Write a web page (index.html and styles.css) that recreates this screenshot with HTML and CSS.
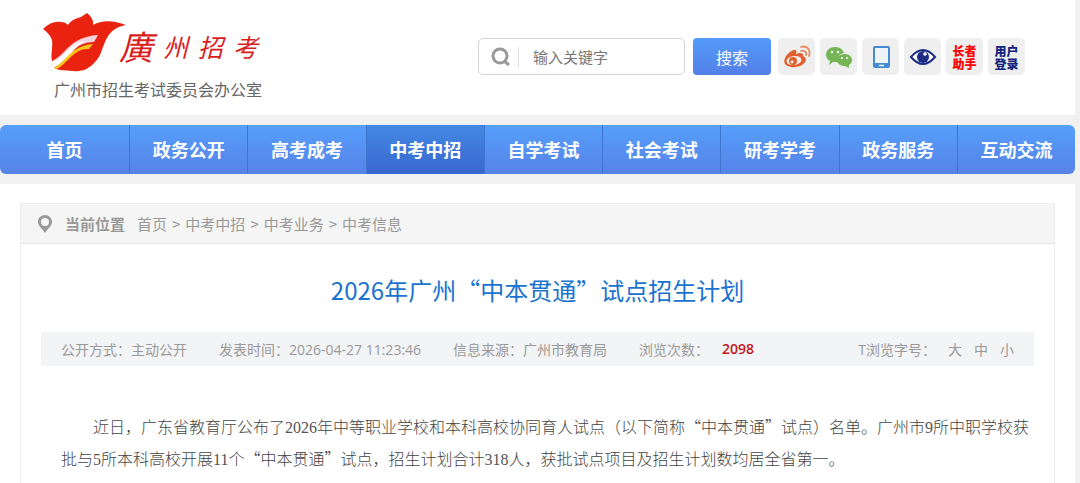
FILE: index.html
```html
<!DOCTYPE html>
<html lang="zh-CN">
<head>
<meta charset="utf-8">
<title>2026年广州“中本贯通”试点招生计划</title>
<link rel="stylesheet" href="styles.css">
</head>
<body>
<div class="page">
  <header class="header">
    <a class="brand" href="#">
      <span class="brand-top">
        <svg class="brand-mark" viewBox="0 0 84 60" aria-hidden="true">
          <path fill="#e9230f" d="M0 16C6 10 12 8 18 9C21 9 23 10 25 12C28 7 34 5 38 4L44 0C48 3 51 8 50 12C60 6 72 8 83 12C71 14 66 20 62 29C58 38 58 43 52 49C46 56 39 59 30 58L17 57C11 56 9 53 9 48C7 39 12 29 7 23C5 20 3 18 0 16Z"/>
          <path fill="#f3d3df" d="M9 48C23 42 26 24 55 22L51 29C33 29 29 41 21 47L10 53Z"/>
          <path fill="#fff" d="M9 49C22 45 26 30 42 28L36 32C29 37 25 48 10 55Z"/>
          <path fill="#fac51c" d="M11 55C23 49 27 33 50 31L46 36C31 35 25 50 14 56Z"/>
        </svg>
        <span class="brand-name"><span class="brand-initial">廣</span><span>州</span><span>招</span><span>考</span></span>
      </span>
      <span class="brand-sub">广州市招生考试委员会办公室</span>
    </a>
    <div class="tools">
      <form class="search">
        <label class="search-box">
          <svg class="search-icon" viewBox="0 0 20 20" aria-hidden="true"><circle cx="9" cy="9" r="7" fill="none" stroke="#999" stroke-width="3"/><path d="M13 14l5 4" stroke="#999" stroke-width="3"/></svg>
          <input class="search-input" type="text" placeholder="输入关键字" aria-label="输入关键字">
        </label>
        <button class="search-button" type="button">搜索</button>
      </form>
      <nav class="tiles" aria-label="快捷入口">
        <a class="tile" href="#" aria-label="微博">
          <svg viewBox="0 0 28 24" aria-hidden="true">
            <path fill="#e0602f" d="M11 5C13 4 14 6 13 9C17 7 21 8 20 11C24 13 24 17 19 20C14 23 5 23 2 19C-1 14 6 6 11 5Z"/>
            <ellipse cx="11" cy="15.500" rx="7.500" ry="4.500" fill="#f7efeb" transform="rotate(-8 11 15.500)"/>
            <circle cx="10" cy="16" r="4" fill="#e0602f"/><circle cx="9" cy="17" r="1.400" fill="#fff"/>
            <path d="M18 2C24 0 28 5 26 11M18 6C21 5 24 7 23 10" fill="none" stroke="#e58a5c" stroke-width="1.800" stroke-linecap="round"/>
          </svg>
        </a>
        <a class="tile" href="#" aria-label="微信">
          <svg viewBox="0 0 28 24" aria-hidden="true">
            <path fill="#75b556" d="M10 2C4 2 1 6 1 10C1 13 3 15 5 16L4 20L8 17L13 17C12 12 15 8 19 8C18 4 14 2 10 2Z"/>
            <path fill="#75b556" d="M20 9C15 9 12 12 12 15C12 19 16 21 20 21L24 23L24 20C26 19 27 17 27 15C27 12 24 9 20 9Z"/>
            <g fill="#f5f5f2"><circle cx="7" cy="7" r="1.200"/><circle cx="13" cy="7" r="1.200"/><circle cx="17" cy="13" r="1.100"/><circle cx="22" cy="13" r="1.100"/></g>
          </svg>
        </a>
        <a class="tile" href="#" aria-label="手机版">
          <svg viewBox="0 0 28 24" aria-hidden="true">
            <rect x="6" y="1" width="17" height="22" rx="2" fill="#458bd4"/><rect x="8" y="3" width="13" height="15" fill="#f0f3f5"/><path d="M12 20.500h5" stroke="#eef4fa" stroke-width="1.500"/>
          </svg>
        </a>
        <a class="tile" href="#" aria-label="无障碍浏览">
          <svg viewBox="0 0 28 24" aria-hidden="true">
            <path d="M2 12Q14-2 26 12Q14 26 2 12Z" fill="#fff" stroke="#1c2d85" stroke-width="2"/><circle cx="14" cy="12" r="6" fill="#1c2d85"/><circle cx="16" cy="9" r="1.800" fill="#fff"/>
          </svg>
        </a>
        <a class="tile tile-red" href="#">长者<br>助手</a>
        <a class="tile tile-navy" href="#">用户<br>登录</a>
      </nav>
    </div>
  </header>
  <nav class="nav-band" aria-label="主导航">
    <div class="nav">
      <a class="nav-item nav-home" href="#">首页</a>
      <a class="nav-item" href="#">政务公开</a>
      <a class="nav-item" href="#">高考成考</a>
      <a class="nav-item nav-active" href="#" aria-current="page">中考中招</a>
      <a class="nav-item" href="#">自学考试</a>
      <a class="nav-item" href="#">社会考试</a>
      <a class="nav-item" href="#">研考学考</a>
      <a class="nav-item" href="#">政务服务</a>
      <a class="nav-item" href="#">互动交流</a>
    </div>
  </nav>
  <main class="content">
    <nav class="crumbs" aria-label="当前位置">
      <svg class="pin" viewBox="0 0 14 18" aria-hidden="true"><path fill="#999" fill-rule="evenodd" d="M7 0C3 0 0 3 0 7C0 11 4 13 7 18C10 13 14 11 14 7C14 3 11 0 7 0ZM7 3A4 4 0 1 1 7 11A4 4 0 1 1 7 3Z"/></svg>
      <strong class="crumb-label">当前位置</strong>
      <span class="crumb-list"><a href="#">首页</a><span>&gt;</span><a href="#">中考中招</a><span>&gt;</span><a href="#">中考业务</a><span>&gt;</span><a href="#">中考信息</a></span>
    </nav>
    <article class="article">
      <h1 class="title">2026年广州“中本贯通”试点招生计划</h1>
      <div class="meta">
        <span>公开方式：主动公开</span>
        <span>发表时间：2026-04-27 11:23:46</span>
        <span>信息来源：广州市教育局</span>
        <span class="views">浏览次数：<b class="count">2098</b></span>
        <span class="sizes"><span>T浏览字号：</span><a href="#">大</a><a href="#">中</a><a href="#">小</a></span>
      </div>
      <p class="text">近日，广东省教育厅公布了<span class="num">2026</span>年中等职业学校和本科高校协同育人试点（以下简称“中本贯通”试点）名单。广州市<span class="num">9</span>所中职学校获批与<span class="num">5</span>所本科高校开展<span class="num">11</span>个“中本贯通”试点，招生计划合计<span class="num">318</span>人，获批试点项目及招生计划数均居全省第一。</p>
    </article>
  </main>
</div>
</body>
</html>
```
FILE: styles.css
```css
* { box-sizing: border-box; }
body {
  margin: 0;
  background: #f1f1f1;
  font-family: "Noto Sans CJK SC", sans-serif;
  color: #999;
}
a { color: inherit; text-decoration: none; }
.page {
  display: flex;
  flex-direction: column;
  min-height: 100vh;
  margin-right: 5px;
  background: #fff;
}

.header {
  display: flex;
  justify-content: space-between;
  align-items: flex-start;
  padding: 13px 50px 13px 43px;
}
.brand { display: flex; flex-direction: column; gap: 4px; }
.brand-top { display: flex; align-items: flex-start; }
.brand-mark { width: 84px; height: 60px; }
.brand-name {
  display: flex;
  align-items: center;
  gap: 10px;
  height: 60px;
  padding-top: 6px;
  margin-left: -8px;
  color: #da1d1d;
  font-size: 25px;
  font-style: italic;
  line-height: 40px;
}
.brand-initial { font-size: 34px; }
.brand-sub {
  padding-left: 11px;
  color: #666;
  font-size: 16px;
  line-height: 25px;
}
.tools { display: flex; gap: 7px; padding-top: 25px; }
.search { display: flex; gap: 8px; }
.search-box {
  display: flex;
  align-items: center;
  width: 207px;
  height: 37px;
  padding-left: 12px;
  border: 1px solid #d5d5d5;
  border-radius: 5px;
}
.search-icon { flex: none; width: 20px; height: 20px; }
.search-input {
  flex: 1;
  min-width: 0;
  height: 20px;
  margin-left: 7px;
  padding: 0 0 0 14px;
  border: 0;
  border-left: 1px solid #ddd;
  outline: 0;
  background: transparent;
  color: #777;
  font-family: inherit;
  font-size: 15px;
}
.search-input::placeholder { color: #777; opacity: 1; }
.search-button {
  width: 78px;
  height: 37px;
  padding: 0;
  border: 0;
  border-radius: 4px;
  background: linear-gradient(#539bf9, #547fe7);
  color: #fff;
  font-family: inherit;
  font-size: 16px;
}
.tiles { display: flex; gap: 5px; }
.tile {
  display: flex;
  align-items: center;
  justify-content: center;
  width: 37px;
  height: 37px;
  border-radius: 5px;
  background: #efefef;
  font-size: 12px;
  font-weight: 900;
  line-height: 13px;
}
.tile svg { width: 28px; height: 24px; }
.tile-red { color: #f00; }
.tile-navy { color: #14247c; }

.nav-band { padding: 10px 0; background: #f1f1f1; }
.nav {
  display: flex;
  overflow: hidden;
  border-radius: 6px;
  background: linear-gradient(#569ffb, #5682e6);
}
.nav-item {
  flex: 118;
  border-left: 1px solid #3f75cf;
  color: #fff;
  font-size: 18px;
  font-weight: 700;
  line-height: 49px;
  text-align: center;
}
.nav-home { flex: 130; border-left: 0; }
.nav-active { background: linear-gradient(#4389e4, #3a66ce); }

.content {
  flex: 1;
  margin: 19px 20px 0;
  border: 1px solid #eee;
  border-bottom: 0;
}
.crumbs {
  display: flex;
  align-items: center;
  height: 40px;
  padding-left: 17px;
  border-bottom: 1px solid #e5e5e5;
  background: #f5f5f5;
  font-size: 15px;
}
.pin { width: 14px; height: 18px; }
.crumb-label { margin: 0 12px 0 13px; }
.crumb-list { display: flex; gap: 5px; }
.article { padding: 28px 20px 0; }
.title {
  margin: 0;
  color: #1a73cf;
  font-size: 24px;
  font-weight: 400;
  line-height: 36px;
  text-align: center;
}
.meta {
  display: flex;
  align-items: center;
  gap: 32px;
  height: 34px;
  margin-top: 24px;
  padding: 0 20px;
  background: #f3f4f5;
  font-family: "Open Sans", "Noto Sans CJK SC", sans-serif;
  font-size: 14px;
}
.views { display: flex; gap: 13px; }
.count { color: #c4161c; font-weight: 600; }
.sizes { display: flex; gap: 12px; margin-left: auto; }
.text {
  margin: 44px 0 0;
  padding-left: 20px;
  color: #444;
  font-size: 16px;
  font-weight: 300;
  line-height: 32px;
  text-indent: 2em;
}
.num {
  color: #555;
  font-family: "Liberation Serif", serif;
  line-height: 16px;
}
```
